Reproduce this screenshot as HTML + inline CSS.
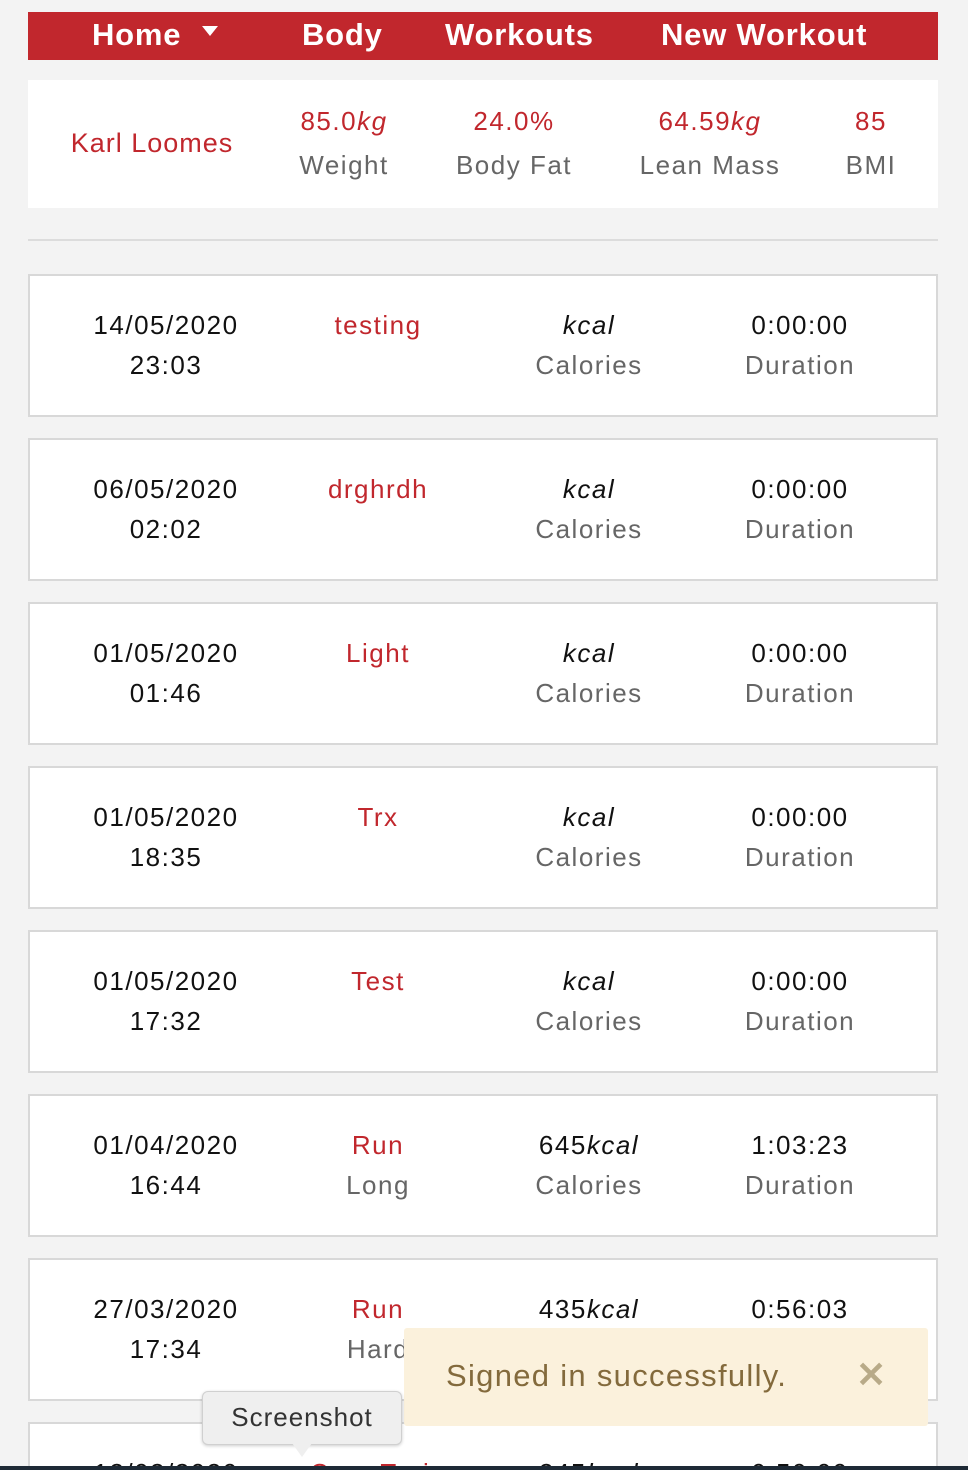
<!DOCTYPE html>
<html style="height:1470px;overflow:hidden"><head><meta charset="utf-8"><style>
html,body{overflow:hidden}
body{margin:0;width:968px;height:1470px;background:#f3f3f3;font-family:"Liberation Sans",sans-serif;position:relative;overflow:hidden}
.nav{position:absolute;left:28px;top:12px;width:910px;height:48px;background:#c1272d}
.nav span{position:absolute;top:5px;color:#fff;font-weight:bold;font-size:31px;letter-spacing:0.8px}
.prof{position:absolute;left:28px;top:80px;width:910px;height:128px;background:#fff}
.c{position:absolute;text-align:center;font-size:26px;letter-spacing:1.5px;white-space:nowrap;transform:translateX(-50%)}
.red{color:#c1272d}.gray{color:#666}.blk{color:#111}
.hr{position:absolute;left:28px;top:239px;width:910px;height:2px;background:#dcdcdc}
.card{position:absolute;left:28px;width:906px;height:139px;background:#fff;border:2px solid #d8d8d8;overflow:hidden}
.toast{position:absolute;left:404px;top:1328px;width:524px;height:98px;background:#fbf1dc;border-radius:3px}
.tip{position:absolute;left:202px;top:1391px;width:198px;height:52px;background:#efefef;border:1px solid #d0d0d0;border-radius:6px;box-shadow:0 1px 3px rgba(0,0,0,.2)}
</style></head><body>
<div class="nav">
<span style="left:64px">Home</span>
<span style="left:174px;top:14px;width:0;height:0;border-left:8px solid transparent;border-right:8px solid transparent;border-top:10px solid #fff"></span>
<span style="left:274px">Body</span>
<span style="left:417px">Workouts</span>
<span style="left:633px">New Workout</span>
</div>
<div class="prof">
<div class="c red" style="left:124px;top:48px;font-size:27px;letter-spacing:1px">Karl Loomes</div>
<div class="c red" style="left:316px;top:26px">85.0<i>kg</i></div>
<div class="c gray" style="left:316px;top:70px">Weight</div>
<div class="c red" style="left:486px;top:26px">24.0%</div>
<div class="c gray" style="left:486px;top:70px">Body Fat</div>
<div class="c red" style="left:682px;top:26px">64.59<i>kg</i></div>
<div class="c gray" style="left:682px;top:70px">Lean Mass</div>
<div class="c red" style="left:843px;top:26px">85</div>
<div class="c gray" style="left:843px;top:70px">BMI</div>
</div>
<div class="hr"></div>
<div id="cards"></div>
<script>
var d=[["14/05/2020","23:03","testing","","","0:00:00"],["06/05/2020","02:02","drghrdh","","","0:00:00"],["01/05/2020","01:46","Light","","","0:00:00"],["01/05/2020","18:35","Trx","","","0:00:00"],["01/05/2020","17:32","Test","","","0:00:00"],["01/04/2020","16:44","Run","Long","645","1:03:23"],["27/03/2020","17:34","Run","Hard","435","0:56:03"],["12/03/2020","","Core Train","","245","0:50:00"]];
var h="";d.forEach(function(r,i){var t=274+i*164;var hh=i==7?' height:44px;border-bottom:0;':'';h+='<div class="card" style="top:'+t+'px;'+hh+'">'+
'<div class="c blk" style="left:136px;top:34px">'+r[0]+'</div><div class="c blk" style="left:136px;top:74px">'+r[1]+'</div>'+
'<div class="c red" style="left:348px;top:34px">'+r[2]+'</div><div class="c gray" style="left:348px;top:74px">'+r[3]+'</div>'+
'<div class="c blk" style="left:559px;top:34px">'+r[4]+'<i>kcal</i></div><div class="c gray" style="left:559px;top:74px">Calories</div>'+
'<div class="c blk" style="left:770px;top:34px">'+r[5]+'</div><div class="c gray" style="left:770px;top:74px">Duration</div></div>'});
document.getElementById("cards").innerHTML=h;
</script>
<div class="toast">
<div style="position:absolute;left:42px;top:30px;font-size:31px;letter-spacing:1.3px;color:#836a3c">Signed in successfully.</div>
<div style="position:absolute;left:452px;top:26px;font-size:36px;font-weight:bold;color:#b8aa88">✕</div>
</div>
<div class="tip"><div style="position:absolute;left:0;right:0;top:10px;text-align:center;font-size:26px;letter-spacing:1px;color:#333">Screenshot</div></div>
<div style="position:absolute;left:292px;top:1443px;width:0;height:0;border-left:10px solid transparent;border-right:10px solid transparent;border-top:14px solid #efefef"></div>
<div style="position:absolute;left:0;top:1466px;width:968px;height:4px;background:#1e2a36"></div>
</body></html>
